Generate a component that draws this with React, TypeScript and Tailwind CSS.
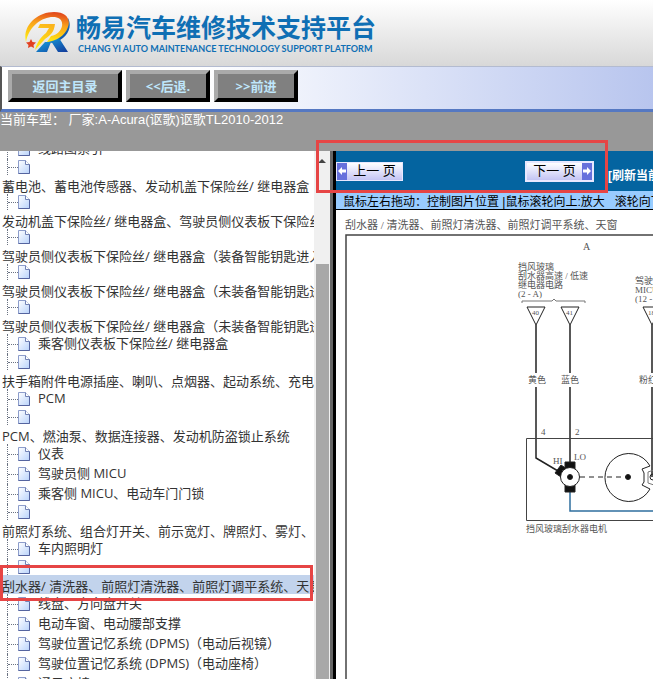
import clsx from "clsx";

type TreeNode = {
    label: string;
    wrapped?: boolean;
    selected?: boolean;
}

const nodes: TreeNode[] = [
    { label: "线路图索引" },
    { label: "蓄电池、蓄电池传感器、发动机盖下保险丝/ 继电器盒", wrapped: true },
    { label: "发动机盖下保险丝/ 继电器盒、驾驶员侧仪表板下保险丝/ 继电器盒", wrapped: true },
    { label: "驾驶员侧仪表板下保险丝/ 继电器盒（装备智能钥匙进入系统）", wrapped: true },
    { label: "驾驶员侧仪表板下保险丝/ 继电器盒（未装备智能钥匙进入系统）", wrapped: true },
    { label: "驾驶员侧仪表板下保险丝/ 继电器盒（未装备智能钥匙进入系统）", wrapped: true },
    { label: "乘客侧仪表板下保险丝/ 继电器盒" },
    { label: "扶手箱附件电源插座、喇叭、点烟器、起动系统、充电系统", wrapped: true },
    { label: "PCM" },
    { label: "PCM、燃油泵、数据连接器、发动机防盗锁止系统", wrapped: true },
    { label: "仪表" },
    { label: "驾驶员侧 MICU" },
    { label: "乘客侧 MICU、电动车门门锁" },
    { label: "前照灯系统、组合灯开关、前示宽灯、牌照灯、雾灯、", wrapped: true },
    { label: "车内照明灯" },
    { label: "刮水器/ 清洗器、前照灯清洗器、前照灯调平系统、天窗", wrapped: true, selected: true },
    { label: "线盘、方向盘开关" },
    { label: "电动车窗、电动腰部支撑" },
    { label: "驾驶位置记忆系统 (DPMS)（电动后视镜）" },
    { label: "驾驶位置记忆系统 (DPMS)（电动座椅）" },
    { label: "通风座椅" },
]

function Logo() {
    return (
        <svg viewBox="0 0 46 42" className="w-[46px] h-[42px] shrink-0" aria-hidden="true">
            <defs>
                <linearGradient id="flame" x1="0.6" y1="0" x2="0.4" y2="1">
                    <stop offset="0" stopColor="#e2481c" />
                    <stop offset="0.4" stopColor="#f9a11c" />
                    <stop offset="1" stopColor="#ffee10" />
                </linearGradient>
                <linearGradient id="slash" x1="0.7" y1="0" x2="0.3" y2="1">
                    <stop offset="0" stopColor="#fbb41c" />
                    <stop offset="1" stopColor="#ffe810" />
                </linearGradient>
                <linearGradient id="leg" x1="0" y1="0" x2="1" y2="1">
                    <stop offset="0" stopColor="#15b0e8" />
                    <stop offset="1" stopColor="#133a9a" />
                </linearGradient>
            </defs>
            <path d="M43 6c5 10-1 21-15 25l-6-1c11-3 18-9 21-24z" fill="url(#leg)" />
            <path d="M11 40l9-10h6l-4 10zM26 29l8-3 9 14H33z" fill="url(#leg)" />
            <path d="M1 30C-3 14 12 0 29 0c12 0 17 7 14 15-3 9-12 14-21 15l4-6c6-1 10-5 11-10 1-6-3-9-9-9C17 5 4 14 1 30z" fill="url(#flame)" />
            <path d="M15 12h15c-1 8-4 11-10 15l-10 11c2-8 6-13 11-17l3-5H13z" fill="url(#slash)" />
            <path d="M6 27l1.5 3 3.500.5-2.500 2.500.5 3-3-1.500L3 36l.5-3L1 30.500l3.500-.5z" fill="#e2401f" />
        </svg>
    )
}

function PageIcon() {
    return (
        <svg viewBox="0 0 12 14" className="w-3 h-3.5 shrink-0" aria-hidden="true">
            <defs>
                <linearGradient id="paper" x1="0" y1="0" x2="1" y2="1">
                    <stop offset="0" stopColor="#ffffff" />
                    <stop offset="1" stopColor="#b9d3fb" />
                </linearGradient>
            </defs>
            <path d="M.5 .5h7l4 4v9H.5z" fill="url(#paper)" stroke="#8d9dcb" />
            <path d="M11.5 4.5v9H.5" fill="none" stroke="#55649f" />
            <path d="M7.5 .5v4h4" fill="#fff" stroke="#7383b5" />
        </svg>
    )
}

function TreeItem({ label, wrapped, selected }: TreeNode) {
    return (
        <li>
            <a href="#" className={clsx("block whitespace-nowrap", !wrapped && "flex h-5")}>
                <span className={clsx("ml-[7px] flex items-center border-l border-dotted border-gray-500", wrapped ? "h-4" : "h-5")}>
                    <span className="w-2.5 border-t border-dotted border-gray-500" />
                    <PageIcon />
                </span>
                <span className={clsx("block", wrapped ? "h-[19px] pl-0.5 leading-[23px]" : "pl-2 leading-[19px]", selected && "bg-[#c2d3ec]")}>
                    {label}
                </span>
            </a>
        </li>
    )
}

function ToolButton({ children, wide }: { children: string, wide?: boolean }) {
    return (
        <button
            type="button"
            className={clsx(
                "h-8 shrink-0 border-4 border-t-[#aaa] border-l-[#aaa] border-r-black border-b-black bg-[#808080] text-[13px] leading-none font-bold text-[#bfe6fb]",
                wide ? "w-[114px]" : "w-[84px]",
            )}
        >
            {children}
        </button>
    )
}

function Arrow({ left }: { left?: boolean }) {
    return (
        <span className="flex h-full w-2.5 items-center justify-center bg-[#6670dc]">
            <svg viewBox="0 0 8 8" className="size-2" aria-hidden="true">
                <path d={left ? "M0 4l4-4v2.5h4v3H4V8z" : "M8 4L4 0v2.5H0v3h4V8z"} fill="#fff" />
            </svg>
        </span>
    )
}

function WiringDiagram() {
    return (
        <svg
            viewBox="336 210 640 480"
            className="block h-[480px] w-[640px] max-w-none font-['Liberation_Serif','Noto_Sans_CJK_SC',serif]"
            fill="none"
            stroke="#222"
        >
            <path d="M976 235H346v455" stroke="#444" strokeWidth="1.5" />
            <g fill="#555" stroke="none" fontSize="9">
                <text x="345" y="229" fontSize="11">刮水器 / 清洗器、前照灯清洗器、前照灯调平系统、天窗</text>
                <text x="583" y="250" fontSize="10">A</text>
                <text x="518" y="270">挡风玻璃</text>
                <text x="518" y="279">刮水器高速 / 低速</text>
                <text x="518" y="288">继电器电路</text>
                <text x="518" y="297">(2 - A)</text>
                <text x="635" y="284">驾驶员侧</text>
                <text x="635" y="293">MICU</text>
                <text x="635" y="302">(12 - B)</text>
                <text x="532" y="315" fontSize="7">40</text>
                <text x="566" y="315" fontSize="7">41</text>
                <text x="648" y="315" fontSize="7">18</text>
                <text x="528" y="383">黄色</text>
                <text x="561" y="383">蓝色</text>
                <text x="639" y="383">粉红色</text>
                <text x="541" y="435">4</text>
                <text x="575" y="435">2</text>
                <text x="553" y="464">HI</text>
                <text x="574" y="460">LO</text>
                <text x="526" y="532">挡风玻璃刮水器电机</text>
            </g>
            <path d="M522 303v-2h30l2-2 2 2h29v2" stroke="#777" />
            <path d="M527 307h18l-9 18zM561 307h18l-9 18zM643 307h18l-9 18z" />
            <path d="M536 325v48M570 325v48M652 325v48M536 387v71l22 13M570 387v76M652 387v90" strokeWidth="1.5" />
            <path d="M976 438.5H526.5v82H976" stroke="#444" />
            <path d="M570 490v21h406" stroke="#2f6f9f" strokeWidth="1.5" />
            <path d="M565 462h10v30h-10zM561 465l6 4-6 8-6-4z" fill="#111" />
            <circle cx="570" cy="477" r="9.5" fill="#fff" />
            <circle cx="570" cy="477" r="2.5" fill="#111" />
            <path d="M650 466a24 24 0 1 0 0 23l-8-4 2-3v-9l-2-4z" />
            <circle cx="628" cy="477" r="2.5" fill="#111" />
            <path d="M580 477h47" strokeDasharray="5 4" />
            <path d="M660 468l-12 4v11l12 4" stroke="#777" />
            <circle cx="653" cy="477" r="3" />
        </svg>
    )
}

export default function App() {
    return (
        <div className="relative flex h-screen flex-col overflow-hidden bg-white font-['Open_Sans','Noto_Sans_CJK_SC',sans-serif]">
            <header className="flex h-[66px] shrink-0 items-start bg-linear-to-b from-white to-[#d8d8d8] pt-3 pl-[25px]">
                <Logo />
                <div className="ml-[5px] whitespace-nowrap text-[#0f6fb4]">
                    <h1 className="text-[25px] leading-[30px] font-bold">畅易汽车维修技术支持平台</h1>
                    <p className="pt-px pl-0.5 font-['Lato',sans-serif] text-[9px] leading-3 font-bold">CHANG YI AUTO MAINTENANCE TECHNOLOGY SUPPORT PLATFORM</p>
                </div>
            </header>
            <nav className="flex h-[46px] shrink-0 gap-1 border-t border-b-3 border-l-2 border-t-[#b3bbd0] border-b-[#5578c2] border-l-[#555] bg-linear-to-r from-white from-30% to-[#b8c5ee] pt-[3px] pl-1.5">
                <ToolButton wide>返回主目录</ToolButton>
                <ToolButton>&lt;&lt;后退.</ToolButton>
                <ToolButton>&gt;&gt;前进</ToolButton>
            </nav>
            <p className="h-[39px] shrink-0 bg-[#989898] font-['Liberation_Sans','Noto_Sans_CJK_SC',sans-serif] text-[13px] leading-4 text-white">
                当前车型： 厂家:A-Acura(讴歌)讴歌TL2010-2012
            </p>
            <div className="flex min-h-0 flex-1">
                <aside className="flex w-[330px] shrink-0">
                    <div className="min-w-0 flex-1 overflow-hidden">
                        <ul className="-mt-3 text-[13px] text-[#333]">
                            {nodes.map((node, i) => (
                                <TreeItem key={i} {...node} />
                            ))}
                        </ul>
                    </div>
                    <div className="flex w-4 flex-col items-center bg-[#f0f0f0] pt-2">
                        <span className="border-x-4 border-b-4 border-x-transparent border-b-[#444]" />
                        <span className="mt-[101px] w-[13px] flex-1 bg-[#a8a8a8]" />
                    </div>
                </aside>
                <main className="min-w-0 flex-1 overflow-hidden border-l-3 border-[#666]">
                    <div className="h-full border-l-3 border-black font-['Liberation_Sans','Noto_Sans_CJK_SC',sans-serif]">
                        <div className="flex h-10 items-center whitespace-nowrap bg-[#0464a0]">
                            <button type="button" className="flex h-[19px] w-[67px] shrink-0 items-center border border-[#e8e8ff] bg-linear-to-b from-white to-[#c4c4f4] text-[13px] text-black">
                                <Arrow left />
                                <span className="flex-1">上一 页</span>
                            </button>
                            <button type="button" className="ml-[122px] flex h-[21px] w-[69px] shrink-0 items-center border-2 border-[#e8e8ff] bg-linear-to-b from-white to-[#c4c4f4] text-[13px] text-black">
                                <span className="flex-1">下一 页</span>
                                <Arrow />
                            </button>
                            <a href="#" className="ml-3.5 pt-2.5 text-[12px] font-bold text-white">[刷新当前页面]</a>
                        </div>
                        <p className="h-[19px] border-b border-black bg-[#99ccff] pl-[7px] text-[12px] leading-[22px] whitespace-nowrap text-black">
                            鼠标左右拖动：控制图片位置 |鼠标滚轮向上:放大 &nbsp; 滚轮向下:缩小
                        </p>
                        <WiringDiagram />
                    </div>
                </main>
            </div>
            <div className="pointer-events-none absolute top-[140px] left-[316px] h-[53px] w-[292px] border-3 border-[#e64545]" />
            <div className="pointer-events-none absolute top-[565px] left-0 h-9 w-[313px] border-3 border-[#e64545]" />
        </div>
    )
}
